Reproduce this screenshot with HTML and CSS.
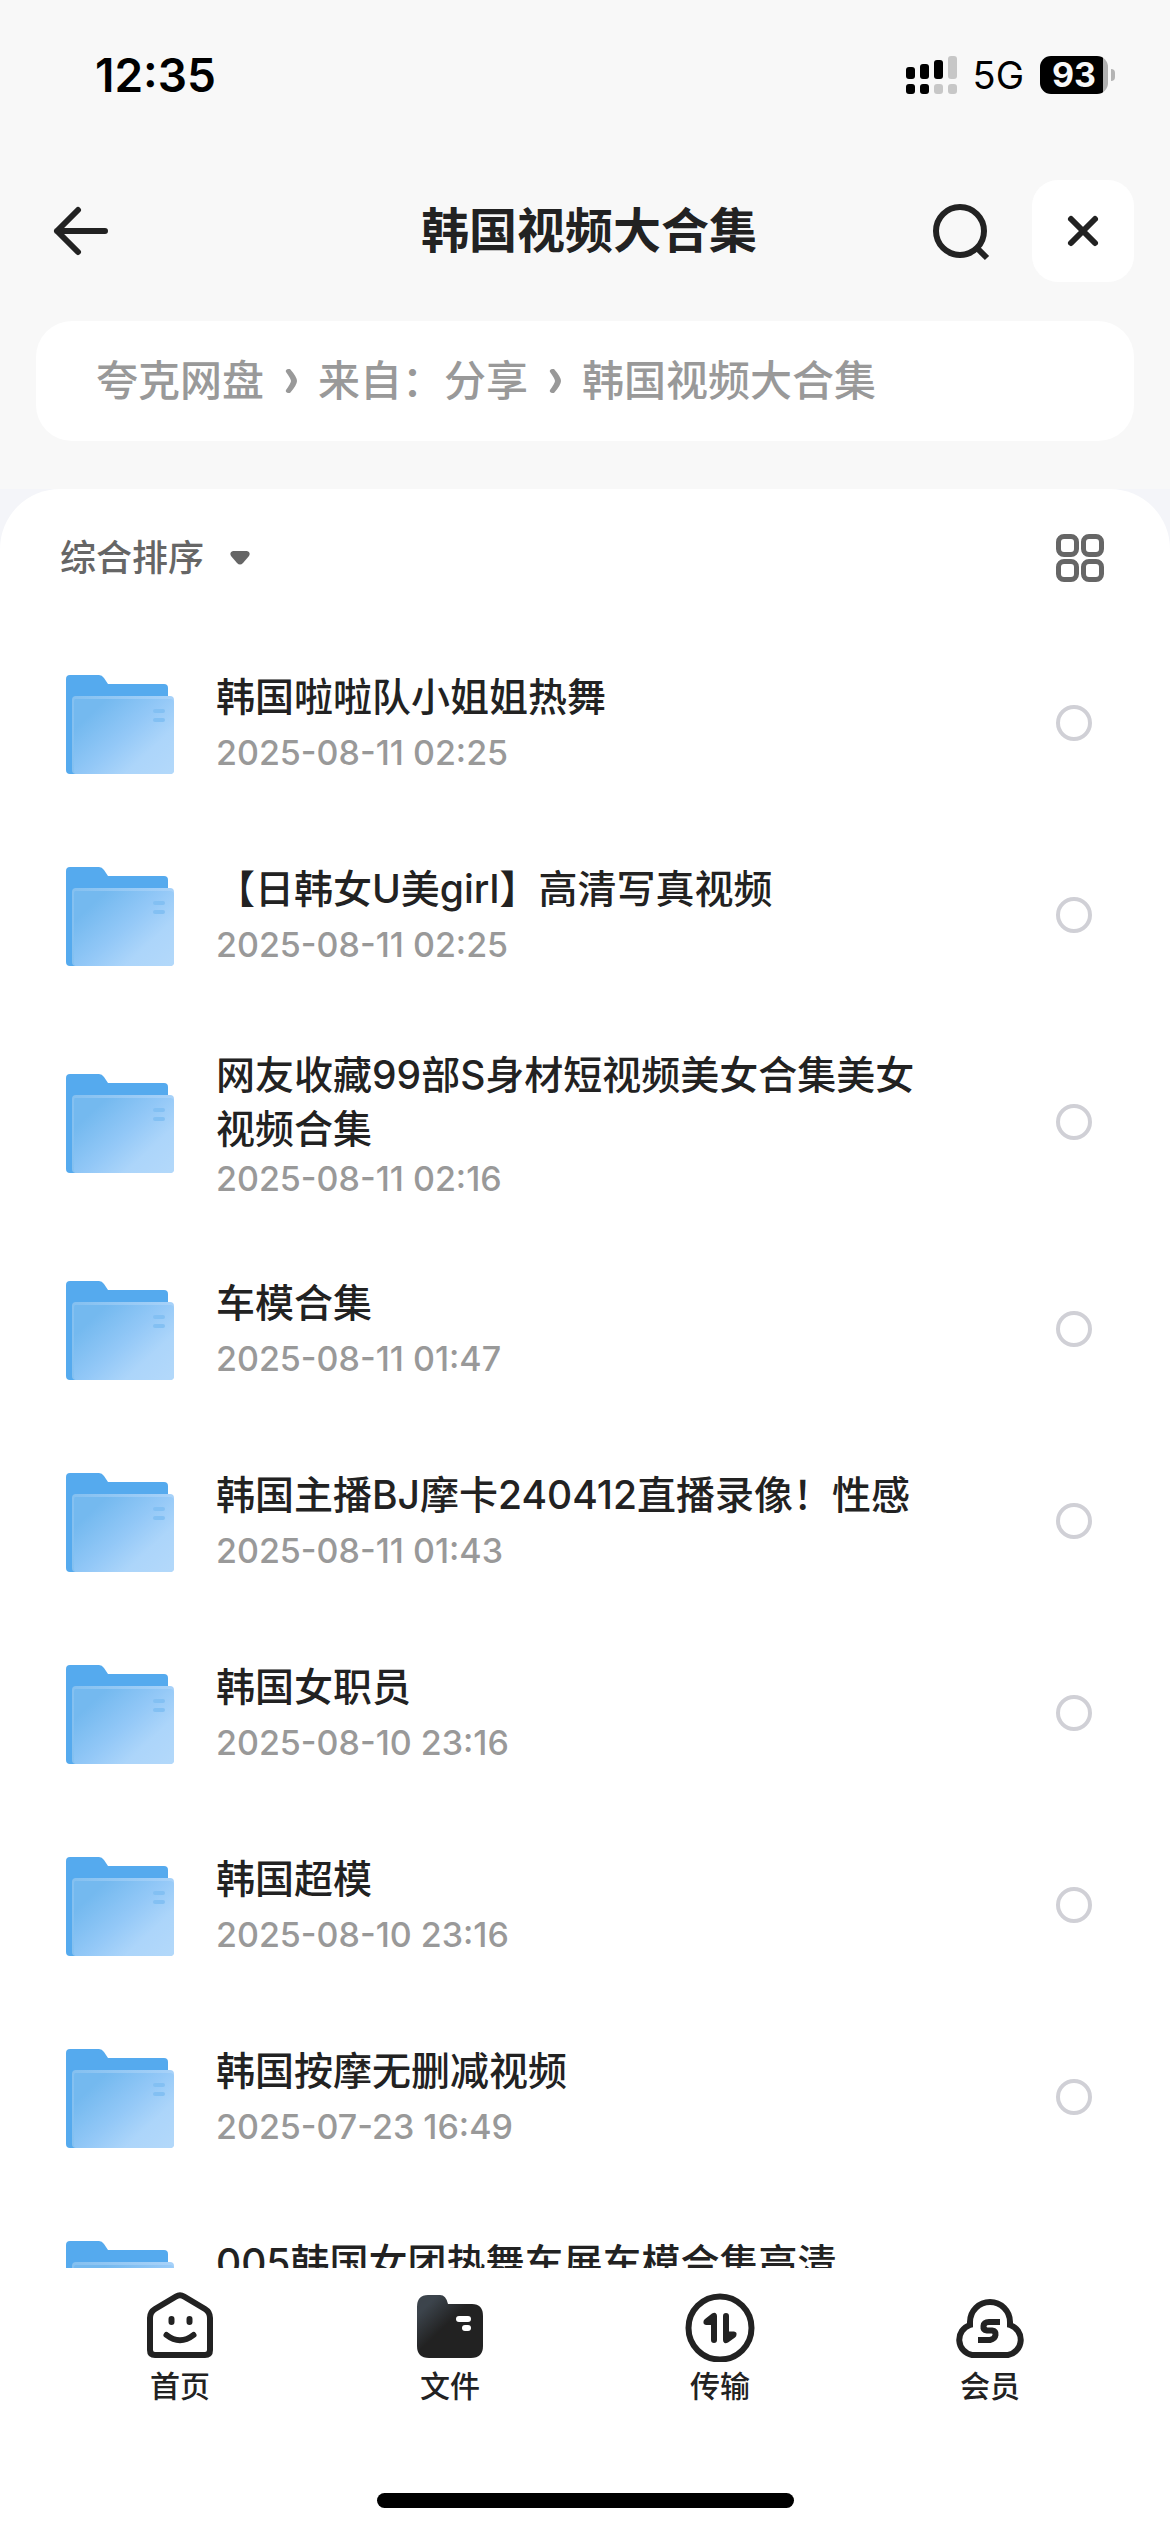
FILE: index.html
```html
<!DOCTYPE html>
<html lang="zh-CN">
<head>
<meta charset="utf-8">
<meta name="viewport" content="width=device-width, initial-scale=1">
<title>韩国视频大合集</title>
<link rel="stylesheet" href="styles.css">
</head>
<body>
<svg class="sprite" width="0" height="0" aria-hidden="true">
  <defs>
    <linearGradient id="folder-front" x1="0" y1="0.1" x2="1" y2="0.9">
      <stop offset="0.15" stop-color="#74b9ef"/>
      <stop offset="0.5" stop-color="#93c8f7"/>
      <stop offset="0.75" stop-color="#acd5fa"/>
      <stop offset="1" stop-color="#b2d8fa"/>
    </linearGradient>
    <linearGradient id="folder-edge" x1="0" y1="0" x2="1" y2="0">
      <stop offset="0" stop-color="#84c0f0"/>
      <stop offset="1" stop-color="#a8d2f9"/>
    </linearGradient>
    <linearGradient id="tab-folder" x1="0.1" y1="0.1" x2="0.7" y2="0.7">
      <stop offset="0.1" stop-color="#3c444c"/>
      <stop offset="0.6" stop-color="#222"/>
    </linearGradient>
    <symbol id="folder" viewBox="0 0 108 102">
      <path d="M0 7Q0 3 4 3H33Q36 3 38 6L42 12H98Q102 12 102 16V60L12 102H4Q0 102 0 98Z" fill="#55aaee"/>
      <rect x="6" y="24" width="102" height="78" rx="4" fill="url(#folder-edge)"/>
      <path d="M9 27H104Q108 27 108 31V98Q108 102 104 102H10Q8 102 8 98V31Q8 27 9 27Z" fill="url(#folder-front)"/>
      <rect x="87" y="37" width="12" height="4" rx="2" fill="#83c0f3"/>
      <rect x="87" y="46" width="12" height="4" rx="2" fill="#83c0f3"/>
    </symbol>
  </defs>
</svg>

<div class="app">
  <div class="status">
    <span class="status-time">12:35</span>
    <div class="status-icons">
      <svg class="signal" viewBox="0 0 51 38" aria-hidden="true">
        <g fill="#000">
          <rect x="0" y="11" width="9" height="12" rx="3"/>
          <rect x="14" y="8" width="9" height="15" rx="3"/>
          <rect x="28" y="4" width="9" height="19" rx="3"/>
          <rect x="0" y="28" width="9" height="10" rx="3"/>
          <rect x="14" y="28" width="9" height="10" rx="3"/>
        </g>
        <g fill="#c7c7c7">
          <rect x="42" y="0" width="9" height="23" rx="3"/>
          <rect x="28" y="28" width="9" height="10" rx="3"/>
          <rect x="42" y="28" width="9" height="10" rx="3"/>
        </g>
      </svg>
      <span class="network">5G</span>
      <span class="battery"><span class="battery-level">93</span></span>
    </div>
  </div>

  <header class="header">
    <button class="icon-button" type="button" aria-label="返回">
      <svg width="72" height="60" viewBox="0 0 72 60" fill="none" stroke="#222" stroke-width="6" stroke-linecap="round" stroke-linejoin="round">
        <path d="M34 9L13 30L34 51M13 30H61"/>
      </svg>
    </button>
    <h1 class="title">韩国视频大合集</h1>
    <div class="actions">
      <button class="icon-button" type="button" aria-label="搜索">
        <svg width="60" height="60" viewBox="0 0 60 60" fill="none" stroke="#222" stroke-width="6">
          <circle cx="30" cy="30" r="24"/>
          <path d="M46 46L57 57"/>
        </svg>
      </button>
      <button class="icon-button close" type="button" aria-label="关闭">
        <svg width="36" height="36" viewBox="0 0 36 36" fill="none" stroke="#222" stroke-width="6" stroke-linecap="round">
          <path d="M6 6L30 30M30 6L6 30"/>
        </svg>
      </button>
    </div>
  </header>

  <nav class="crumbs" aria-label="路径">
    <a href="#">夸克网盘</a>
    <svg class="crumb-arrow" viewBox="0 0 12 24" aria-hidden="true"><path d="M3 0H5Q12 8 12 12T5 24H3Q0 23 1 21Q6 14 6 12T1 3Q0 1 3 0Z"/></svg>
    <a href="#">来自：分享</a>
    <svg class="crumb-arrow" viewBox="0 0 12 24" aria-hidden="true"><path d="M3 0H5Q12 8 12 12T5 24H3Q0 23 1 21Q6 14 6 12T1 3Q0 1 3 0Z"/></svg>
    <a href="#">韩国视频大合集</a>
  </nav>

  <div class="backdrop">
    <main class="sheet">
      <div class="toolbar">
        <button class="sort" type="button">综合排序
          <svg width="20" height="14" viewBox="0 0 20 14" aria-hidden="true"><path d="M3 0H17Q21 1 19 5L13 12Q10 15 7 12L1 5Q-1 1 3 0Z" fill="#666"/></svg>
        </button>
        <button class="icon-button" type="button" aria-label="网格视图">
          <svg width="48" height="48" viewBox="0 0 48 48" fill="none" stroke="#666" stroke-width="5">
            <rect x="2.5" y="2.5" width="18" height="18" rx="5.5"/>
            <rect x="27.5" y="2.5" width="18" height="18" rx="5.5"/>
            <rect x="2.5" y="27.5" width="18" height="18" rx="5.5"/>
            <rect x="27.5" y="27.5" width="18" height="18" rx="5.5"/>
          </svg>
        </button>
      </div>

      <ul class="files">
        <li><label class="file"><svg class="folder"><use href="#folder"/></svg><span class="file-text"><span class="file-name">韩国啦啦队小姐姐热舞</span><time class="file-date">2025-08-11 02:25</time></span><input class="pick" type="checkbox"></label></li>
        <li><label class="file"><svg class="folder"><use href="#folder"/></svg><span class="file-text"><span class="file-name">【日韩女U美girl】高清写真视频</span><time class="file-date">2025-08-11 02:25</time></span><input class="pick" type="checkbox"></label></li>
        <li><label class="file file-tall"><svg class="folder"><use href="#folder"/></svg><span class="file-text"><span class="file-name">网友收藏99部S身材短视频美女合集美女视频合集</span><time class="file-date">2025-08-11 02:16</time></span><input class="pick" type="checkbox"></label></li>
        <li><label class="file"><svg class="folder"><use href="#folder"/></svg><span class="file-text"><span class="file-name">车模合集</span><time class="file-date">2025-08-11 01:47</time></span><input class="pick" type="checkbox"></label></li>
        <li><label class="file"><svg class="folder"><use href="#folder"/></svg><span class="file-text"><span class="file-name">韩国主播BJ摩卡240412直播录像！性感</span><time class="file-date">2025-08-11 01:43</time></span><input class="pick" type="checkbox"></label></li>
        <li><label class="file"><svg class="folder"><use href="#folder"/></svg><span class="file-text"><span class="file-name">韩国女职员</span><time class="file-date">2025-08-10 23:16</time></span><input class="pick" type="checkbox"></label></li>
        <li><label class="file"><svg class="folder"><use href="#folder"/></svg><span class="file-text"><span class="file-name">韩国超模</span><time class="file-date">2025-08-10 23:16</time></span><input class="pick" type="checkbox"></label></li>
        <li><label class="file"><svg class="folder"><use href="#folder"/></svg><span class="file-text"><span class="file-name">韩国按摩无删减视频</span><time class="file-date">2025-07-23 16:49</time></span><input class="pick" type="checkbox"></label></li>
        <li><label class="file"><svg class="folder"><use href="#folder"/></svg><span class="file-text"><span class="file-name">005韩国女团热舞车展车模合集高清</span></span><input class="pick" type="checkbox"></label></li>
      </ul>
    </main>
  </div>

  <nav class="tabs" aria-label="主导航">
    <a class="tab" href="#">
      <svg class="tab-icon" viewBox="0 0 72 72" fill="none" stroke="#222" stroke-width="6" stroke-linecap="round">
        <path d="M32 6.500Q36 4 40 6.500L61 19Q66 22 66 28V60Q66 65 61 65H11Q6 65 6 60V28Q6 22 11 19Z"/>
        <path d="M27.500 29V32M45.500 29V32"/>
        <path d="M22.500 45Q36 55.500 49.500 45"/>
      </svg>
      首页
    </a>
    <a class="tab" href="#" aria-current="page">
      <svg class="tab-icon" viewBox="0 0 72 72">
        <path d="M3 17Q3 5 14 5H26Q32 5 34 14H58Q69 14 69 26V56Q69 68 57 68H15Q3 68 3 56Z" fill="url(#tab-folder)"/>
        <rect x="42" y="26" width="15" height="6" rx="3" fill="#fff"/>
        <rect x="48" y="35" width="9" height="6" rx="3" fill="#fff"/>
      </svg>
      文件
    </a>
    <a class="tab" href="#">
      <svg class="tab-icon" viewBox="0 0 72 72">
        <circle cx="36" cy="38" r="31.500" fill="none" stroke="#222" stroke-width="6"/>
        <path d="M28 23.500Q30 22.500 31.500 23Q33 24 33 26V50Q33 53 30 53T27 50V35H22Q19 34.500 19.500 31.500Q19.500 30 21 29Z" fill="#222"/>
        <path d="M44 52.500Q42 53.500 40.500 53Q39 52 39 50V26Q39 23 42 23T45 26V41.500H50Q53 42 52.500 44.500Q52.500 46.500 51 47.500Z" fill="#222"/>
      </svg>
      传输
    </a>
    <a class="tab" href="#">
      <svg class="tab-icon" viewBox="0 0 72 72" fill="none" stroke="#222" stroke-width="6">
        <path d="M18 65H54A15.500 15.500 0 0 0 56 35V32A20 20 0 0 0 16 32V35A15.500 15.500 0 0 0 18 65Z"/>
        <path d="M46 32H35Q30 32 29.500 36T33 40.500H38Q42 41 41.500 45T36 50H24"/>
      </svg>
      会员
    </a>
  </nav>
  <div class="home-bar"><span class="home-indicator"></span></div>
</div>
</body>
</html>
```
FILE: styles.css
```css
* {
  box-sizing: border-box;
}

body {
  margin: 0;
  background: #fff;
  color: #222;
  font-family: Inter, "Noto Sans CJK SC", sans-serif;
}

a {
  color: inherit;
  text-decoration: none;
}

button {
  padding: 0;
  border: 0;
  background: none;
  color: inherit;
  font: inherit;
}

svg {
  display: block;
  flex: none;
}

.sprite {
  position: absolute;
}

.app {
  display: flex;
  flex-direction: column;
  height: 100vh;
  background: #f8f8f8;
}

/* Status bar */
.status {
  display: flex;
  flex: none;
  align-items: center;
  justify-content: space-between;
  height: 150px;
  padding: 0 55px 0 95px;
  color: #000;
}

.status-time {
  font-size: 46px;
  font-weight: 600;
}

.status-icons {
  display: flex;
  align-items: center;
}

.signal {
  width: 51px;
  height: 38px;
}

.network {
  margin: 0 16px;
  font-size: 38px;
}

.battery {
  display: flex;
  align-items: center;
  gap: 3px;
}

.battery::after {
  width: 4px;
  height: 12px;
  border-radius: 0 6px 6px 0;
  background: #b4b4b4;
  content: "";
}

.battery-level {
  width: 68px;
  height: 38px;
  border-radius: 11px;
  background: linear-gradient(90deg, #000 63px, #b0b0b0 63px);
  color: #f8f8f8;
  font-size: 34px;
  font-weight: 700;
  line-height: 38px;
  text-align: center;
}

/* Header */
.header {
  display: grid;
  flex: none;
  grid-template-columns: 1fr auto 1fr;
  align-items: center;
  height: 162px;
  padding: 0 36px 0 44px;
}

.icon-button {
  display: flex;
  align-items: center;
  justify-content: center;
  justify-self: start;
}

.title {
  margin: 0;
  font-size: 48px;
  font-weight: 600;
  line-height: 66px;
}

.actions {
  display: flex;
  align-items: center;
  justify-self: end;
  gap: 42px;
}

.close {
  width: 102px;
  height: 102px;
  border-radius: 26px;
  background: #fff;
}

/* Path */
.crumbs {
  display: flex;
  flex: none;
  align-items: center;
  gap: 21px;
  margin: 9px 36px 48px;
  padding: 30px 60px;
  border-radius: 36px;
  background: #fff;
  color: #999;
  font-size: 42px;
  font-weight: 500;
  line-height: 60px;
}

.crumb-arrow {
  width: 12px;
  height: 24px;
  fill: #999;
}

/* File list */
.backdrop {
  flex: 1;
  min-height: 0;
  background: #f4f5f9;
}

.sheet {
  height: 100%;
  overflow: hidden;
  border-radius: 60px 60px 0 0;
  background: #fff;
}

.toolbar {
  display: flex;
  align-items: center;
  justify-content: space-between;
  height: 138px;
  padding: 0 66px 0 60px;
}

.sort {
  display: flex;
  align-items: center;
  gap: 26px;
  color: #666;
  font-size: 36px;
  font-weight: 500;
  line-height: 48px;
}

.files {
  margin: 0;
  padding: 0;
  list-style: none;
}

.file {
  display: flex;
  align-items: center;
  min-height: 192px;
  padding: 31px 78px 31px 66px;
}

.folder {
  width: 108px;
  height: 102px;
}

.file-text {
  display: flex;
  flex: 1;
  flex-direction: column;
  gap: 6px;
  min-width: 0;
  min-height: 106px;
  margin: 0 132px 0 42px;
}

.file-tall .file-text {
  gap: 0;
  padding-top: 6px;
}

.file-name {
  font-size: 39px;
  font-weight: 500;
  line-height: 54px;
}

.file-date {
  color: #999;
  font-size: 34px;
  font-weight: 500;
  line-height: 46px;
}

.pick {
  flex: none;
  width: 36px;
  height: 36px;
  margin: 0;
  border: 4px solid #d0d0d6;
  border-radius: 50%;
  appearance: none;
}

.pick:checked {
  border-color: #55aaee;
  background: #55aaee;
}

/* Bottom navigation */
.tabs {
  display: flex;
  flex: none;
  padding: 22px 45px 0;
  background: #fff;
}

.tab {
  display: flex;
  flex: 1;
  flex-direction: column;
  align-items: center;
  gap: 2px;
  font-size: 30px;
  font-weight: 500;
  line-height: 44px;
}

.tab-icon {
  width: 72px;
  height: 72px;
}

.home-bar {
  display: flex;
  flex: none;
  align-items: flex-end;
  justify-content: center;
  height: 124px;
  padding-bottom: 24px;
  background: #fff;
}

.home-indicator {
  width: 417px;
  height: 15px;
  border-radius: 8px;
  background: #000;
}
```
